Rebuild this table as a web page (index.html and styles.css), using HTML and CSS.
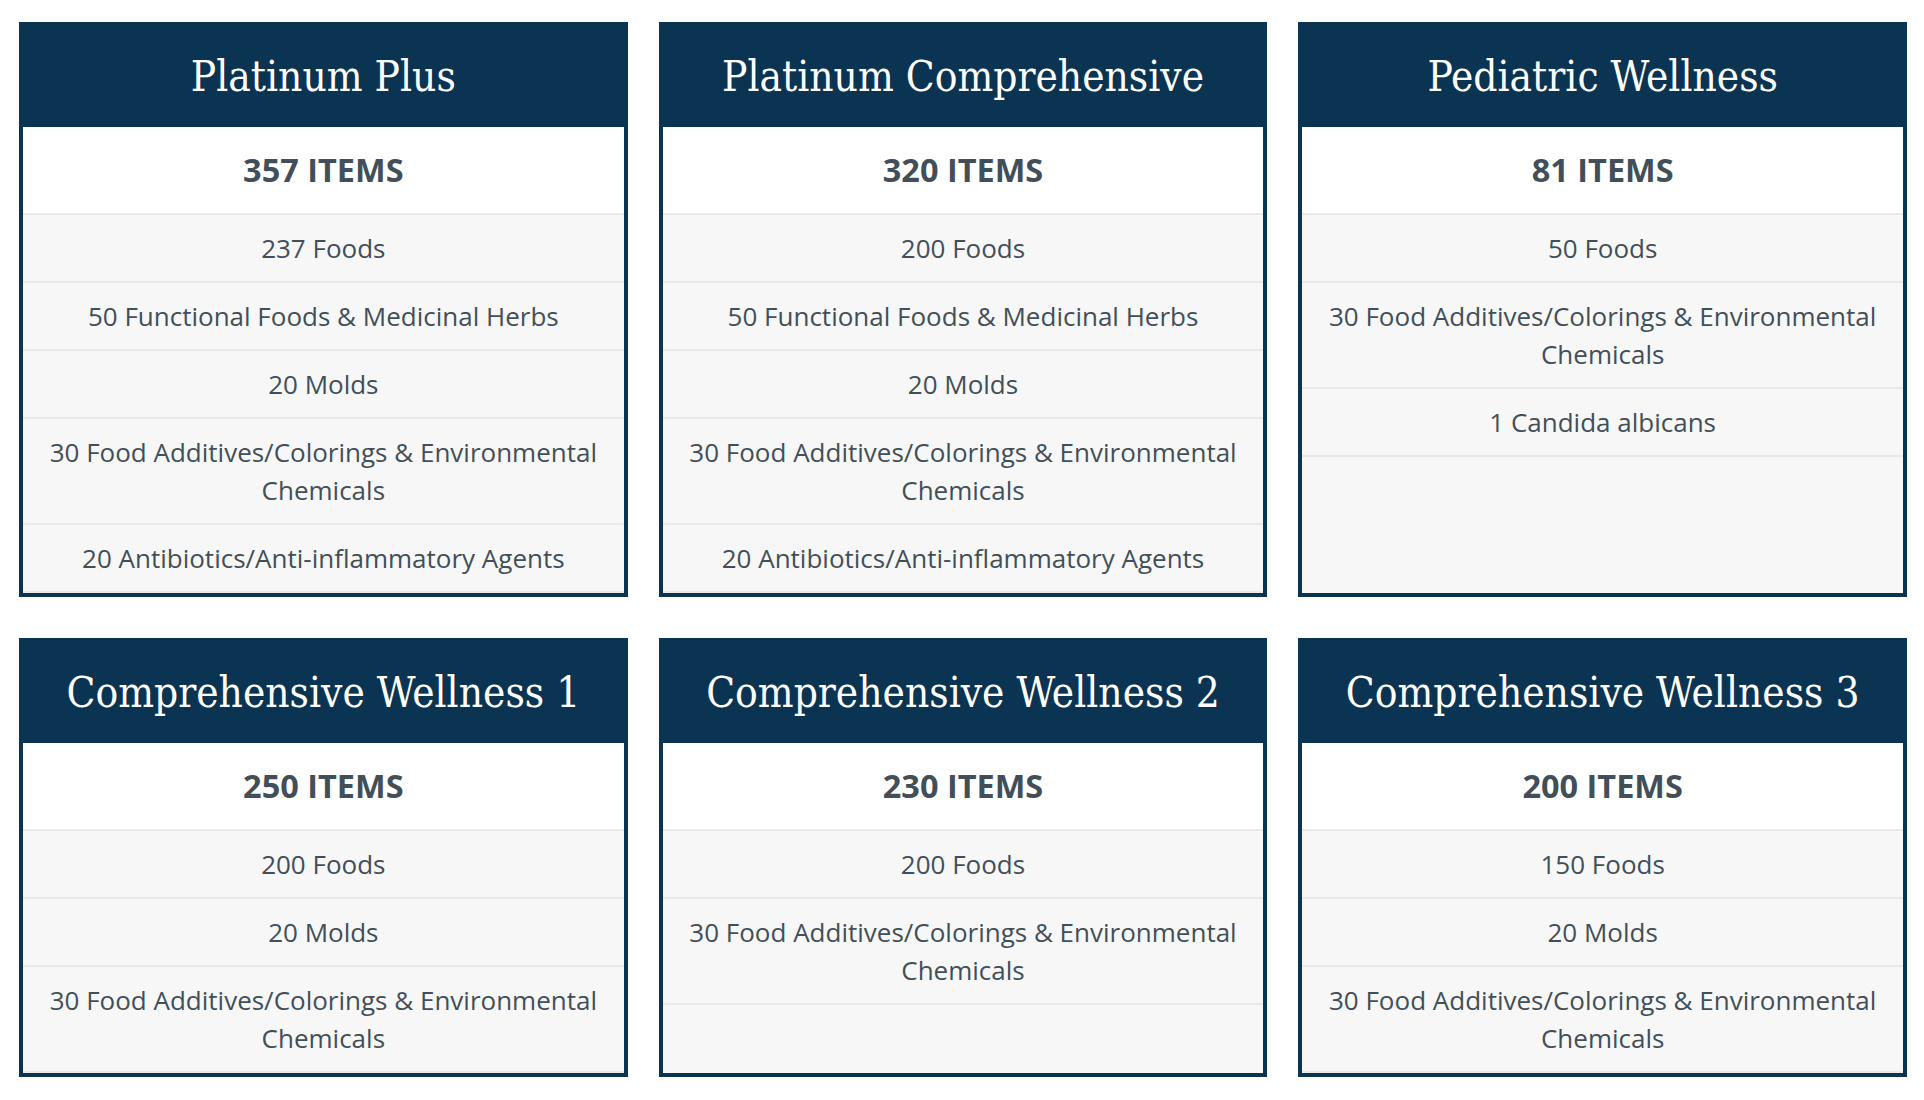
FILE: index.html
```html
<!DOCTYPE html>
<html lang="en">
<head>
<meta charset="utf-8">
<title>Panels</title>
<link rel="stylesheet" href="styles.css">
</head>
<body>
<main class="grid">
  <section class="card">
    <h2 class="card-title">Platinum Plus</h2>
    <ul class="card-list">
      <li class="count">357 ITEMS</li>
      <li>237 Foods</li>
      <li>50 Functional Foods &amp; Medicinal Herbs</li>
      <li>20 Molds</li>
      <li>30 Food Additives/Colorings &amp; Environmental Chemicals</li>
      <li>20 Antibiotics/Anti-inflammatory Agents</li>
    </ul>
  </section>
  <section class="card">
    <h2 class="card-title">Platinum Comprehensive</h2>
    <ul class="card-list">
      <li class="count">320 ITEMS</li>
      <li>200 Foods</li>
      <li>50 Functional Foods &amp; Medicinal Herbs</li>
      <li>20 Molds</li>
      <li>30 Food Additives/Colorings &amp; Environmental Chemicals</li>
      <li>20 Antibiotics/Anti-inflammatory Agents</li>
    </ul>
  </section>
  <section class="card">
    <h2 class="card-title">Pediatric Wellness</h2>
    <ul class="card-list">
      <li class="count">81 ITEMS</li>
      <li>50 Foods</li>
      <li>30 Food Additives/Colorings &amp; Environmental Chemicals</li>
      <li>1 Candida albicans</li>
    </ul>
  </section>
  <section class="card">
    <h2 class="card-title">Comprehensive Wellness 1</h2>
    <ul class="card-list">
      <li class="count">250 ITEMS</li>
      <li>200 Foods</li>
      <li>20 Molds</li>
      <li>30 Food Additives/Colorings &amp; Environmental Chemicals</li>
    </ul>
  </section>
  <section class="card">
    <h2 class="card-title">Comprehensive Wellness 2</h2>
    <ul class="card-list">
      <li class="count">230 ITEMS</li>
      <li>200 Foods</li>
      <li>30 Food Additives/Colorings &amp; Environmental Chemicals</li>
    </ul>
  </section>
  <section class="card">
    <h2 class="card-title">Comprehensive Wellness 3</h2>
    <ul class="card-list">
      <li class="count">200 ITEMS</li>
      <li>150 Foods</li>
      <li>20 Molds</li>
      <li>30 Food Additives/Colorings &amp; Environmental Chemicals</li>
    </ul>
  </section>
</main>
</body>
</html>
```
FILE: styles.css
```css
html, body {
  margin: 0;
  padding: 0;
  background: #ffffff;
}

body {
  font-family: "Open Sans", "Liberation Sans", sans-serif;
  color: #424f59;
}

.grid {
  display: grid;
  grid-template-columns: repeat(3, 1fr);
  column-gap: 31px;
  row-gap: 41px;
  padding: 22px 17px 0 19px;
}

.card {
  display: flex;
  flex-direction: column;
  border: 4px solid #0b3452;
  background: #f7f7f7;
}

.card-title {
  margin: 0;
  height: 101px;
  display: flex;
  align-items: center;
  justify-content: center;
  background: #0b3452;
  color: #ffffff;
  font-family: "DejaVu Serif Condensed", "DejaVu Serif", serif;
  font-weight: normal;
  font-size: 42px;
  line-height: 1;
}

.card-list {
  list-style: none;
  margin: 0;
  padding: 0;
}

.card-list li {
  padding: 14px 16px;
  font-size: 26px;
  line-height: 38px;
  text-align: center;
  border-bottom: 2px solid #e9e9e9;
  background: #f7f7f7;
}

.card-list li.count {
  background: #ffffff;
  font-weight: bold;
  font-size: 32.5px;
  padding: 24px 16px;
}
```
